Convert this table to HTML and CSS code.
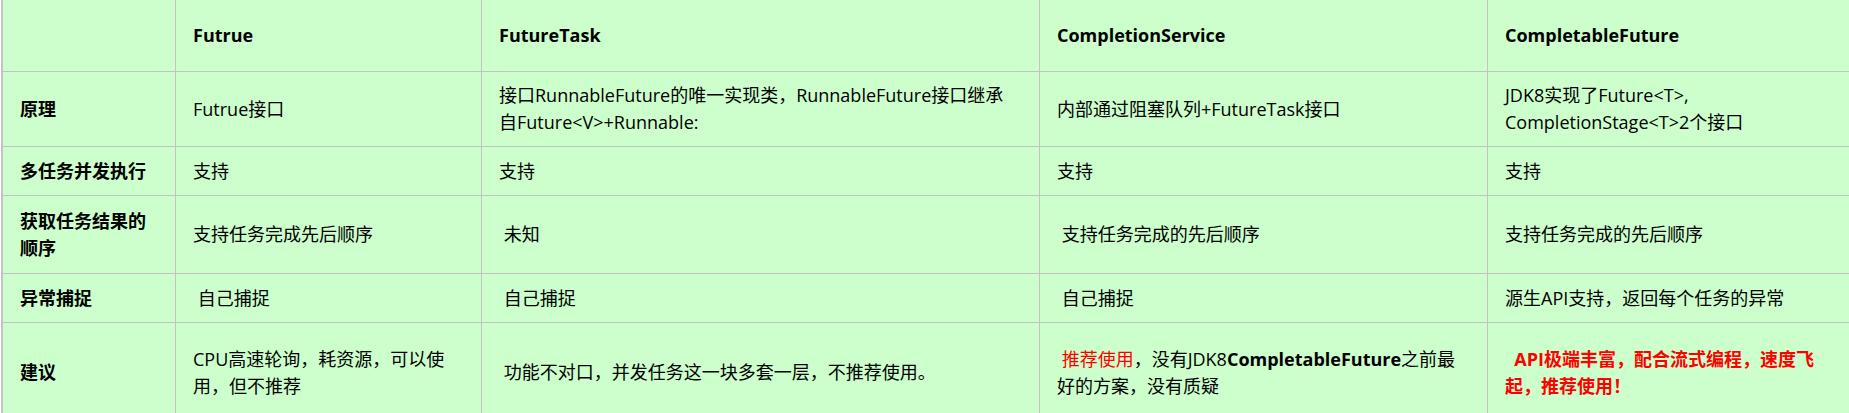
FILE: index.html
```html
<!DOCTYPE html>
<html lang="zh">
<head>
<meta charset="utf-8">
<title>Future 对比</title>
<link rel="stylesheet" href="styles.css">
</head>
<body>
<table class="cmp">
  <colgroup>
    <col class="c0"><col class="c1"><col class="c2"><col class="c3"><col class="c4">
  </colgroup>
  <tr class="r-head">
    <th></th>
    <th>Futrue</th>
    <th>FutureTask</th>
    <th>CompletionService</th>
    <th>CompletableFuture</th>
  </tr>
  <tr class="r-tall">
    <th>原理</th>
    <td>Futrue接口</td>
    <td>接口RunnableFuture的唯一实现类，RunnableFuture接口继承<br>自Future&lt;V&gt;+Runnable:</td>
    <td>内部通过阻塞队列+FutureTask接口</td>
    <td>JDK8实现了Future&lt;T&gt;,<br>CompletionStage&lt;T&gt;2个接口</td>
  </tr>
  <tr class="r-short">
    <th>多任务并发执行</th>
    <td>支持</td>
    <td>支持</td>
    <td>支持</td>
    <td>支持</td>
  </tr>
  <tr class="r-order">
    <th>获取任务结果的<br>顺序</th>
    <td>支持任务完成先后顺序</td>
    <td>&nbsp;未知</td>
    <td>&nbsp;支持任务完成的先后顺序</td>
    <td>支持任务完成的先后顺序</td>
  </tr>
  <tr class="r-short">
    <th>异常捕捉</th>
    <td>&nbsp;自己捕捉</td>
    <td>&nbsp;自己捕捉</td>
    <td>&nbsp;自己捕捉</td>
    <td>源生API支持，返回每个任务的异常</td>
  </tr>
  <tr class="r-advice">
    <th>建议</th>
    <td>CPU高速轮询，耗资源，可以使<br>用，但不推荐</td>
    <td>&nbsp;功能不对口，并发任务这一块多套一层，不推荐使用。</td>
    <td>&nbsp;<span class="red">推荐使用</span>，没有JDK8<b>CompletableFuture</b>之前最<br>好的方案，没有质疑</td>
    <td><b class="red">&nbsp;&nbsp;API极端丰富，配合流式编程，速度飞<br>起，推荐使用！</b></td>
  </tr>
</table>
</body>
</html>
```
FILE: styles.css
```css
html, body {
  margin: 0;
  padding: 0;
  background: #ffffff;
  overflow: hidden;
}

.cmp {
  margin-left: 1px;
  table-layout: fixed;
  width: 1887px;
  border-collapse: separate;
  border-spacing: 0;
  border-left: 2px solid #c2c2c2;
  background: #ccffcc;
  font-family: "Open Sans", "Noto Sans CJK SC", sans-serif;
  font-size: 18px;
  line-height: 27px;
  color: #000000;
}

.c0 { width: 173px; }
.c1 { width: 306px; }
.c2 { width: 558px; }
.c3 { width: 448px; }
.c4 { width: 400px; }

.cmp th,
.cmp td {
  padding: 0 17px;
  border-right: 1px solid #c2c2c2;
  border-bottom: 1px solid #c2c2c2;
  text-align: left;
  vertical-align: middle;
  white-space: nowrap;
}

.cmp th {
  font-weight: 700;
}

.cmp td {
  font-weight: 400;
}

.cmp b {
  font-weight: 700;
}

.r-head { height: 72px; }
.r-tall { height: 75px; }
.r-short { height: 49px; }
.r-order { height: 78px; }
.r-advice { height: 100px; }

.red {
  color: #ff0000;
}
```
